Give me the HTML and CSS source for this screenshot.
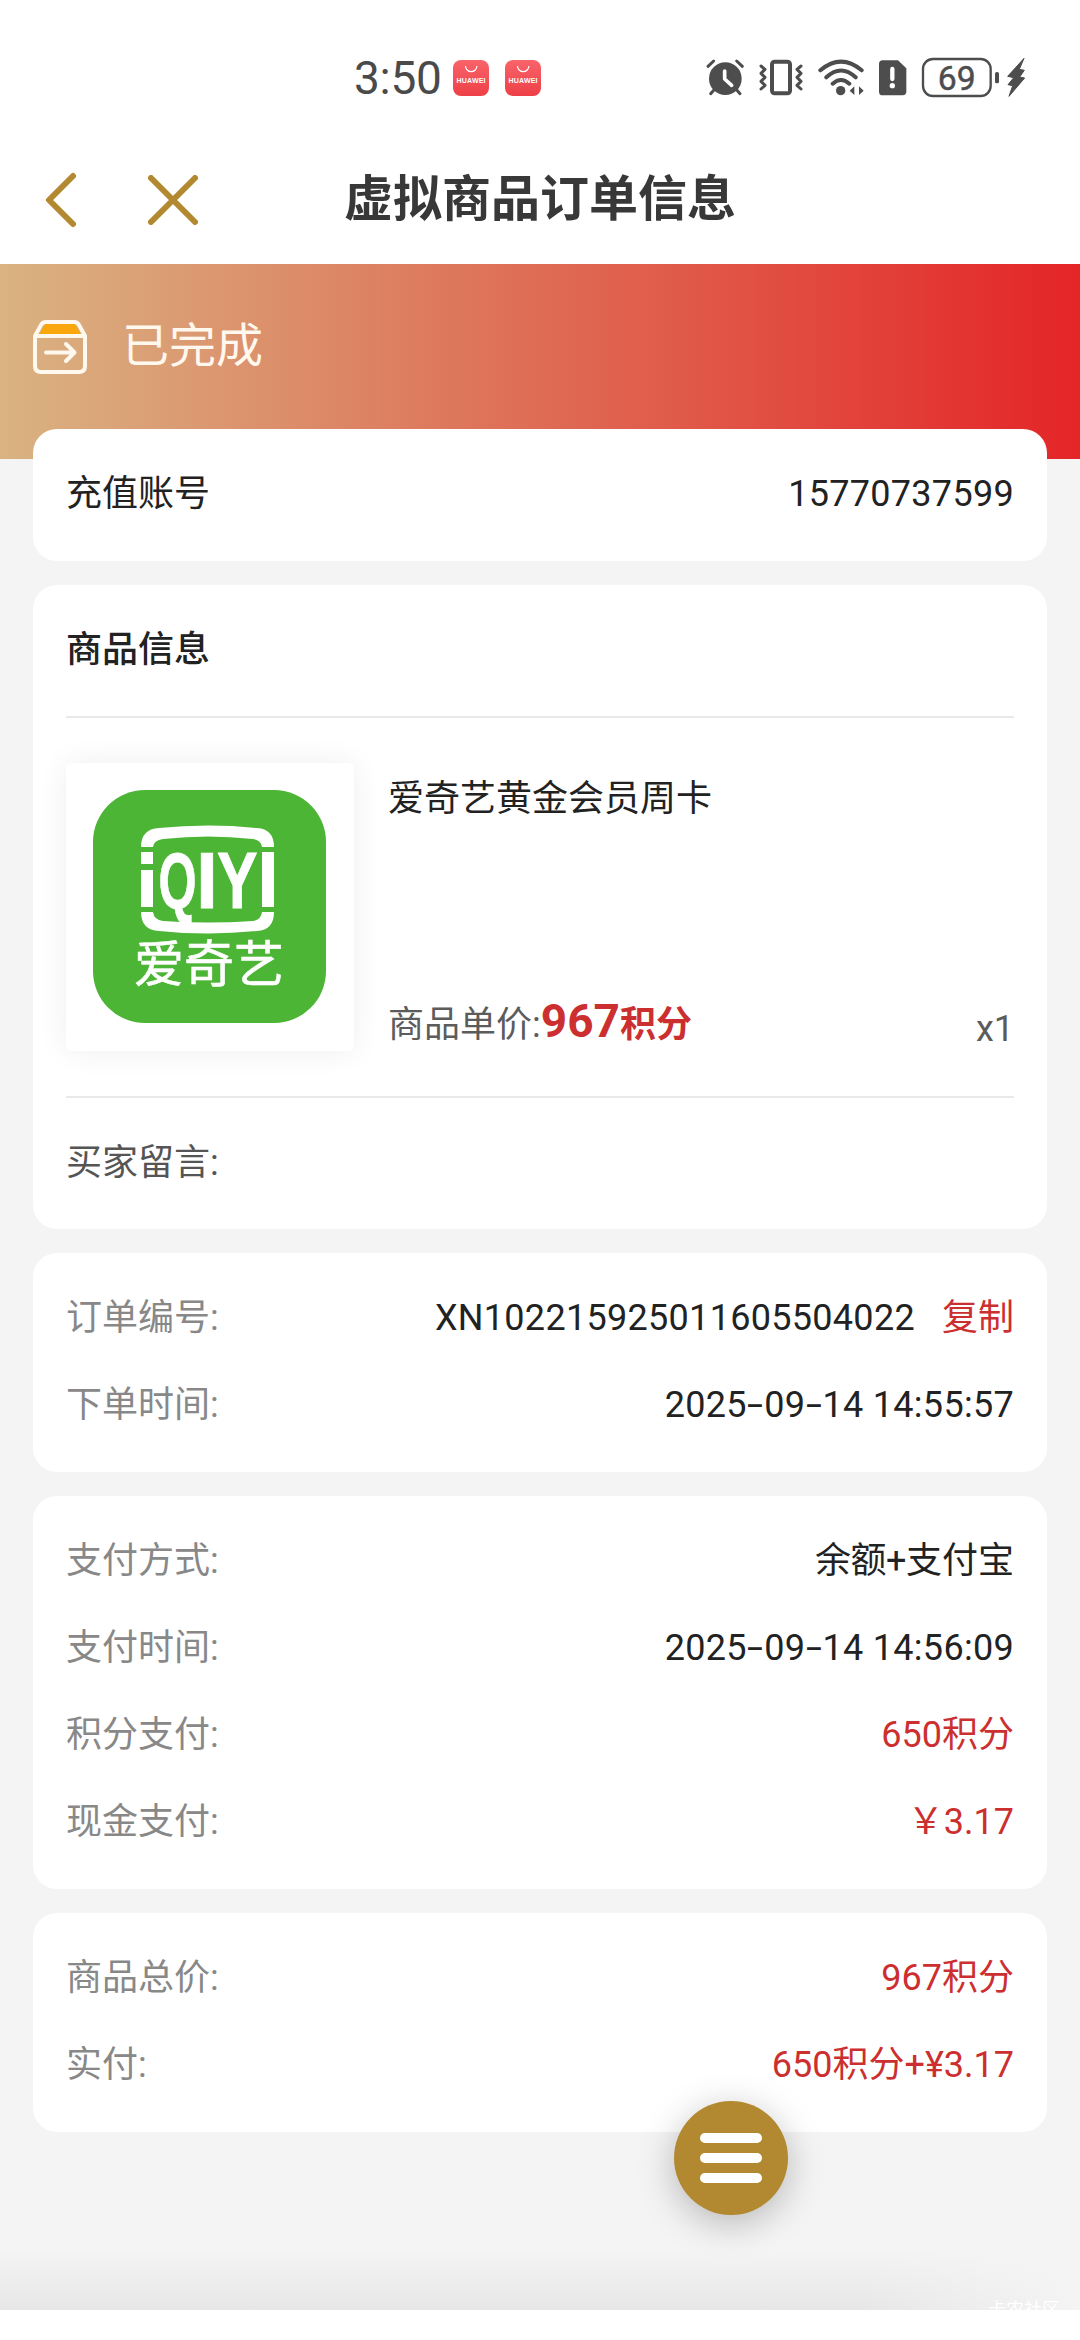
FILE: index.html
```html
<!DOCTYPE html>
<html lang="zh-CN">
<head>
<meta charset="utf-8">
<title>虚拟商品订单信息</title>
<link rel="stylesheet" href="styles.css">
</head>
<body>
<div class="screen">
  <header class="statusbar">
    <span class="time">3:50</span>
    <svg class="app" viewBox="0 0 36 36"><defs><linearGradient id="hw" x1="0" y1="0" x2="0" y2="1"><stop offset="0" stop-color="#f8646a"/><stop offset="1" stop-color="#ee3f46"/></linearGradient></defs><rect width="36" height="36" rx="8" fill="url(#hw)"/><path d="M12.5 6a5.7 5.7 0 0 0 11.4 0" fill="none" stroke="#fff" stroke-width="1.2"/><text x="18" y="23" textLength="29" text-anchor="middle" class="hwtext">HUAWEI</text></svg>
    <svg class="app" viewBox="0 0 36 36"><rect width="36" height="36" rx="8" fill="url(#hw)"/><path d="M12.5 6a5.7 5.7 0 0 0 11.4 0" fill="none" stroke="#fff" stroke-width="1.2"/><text x="18" y="23" textLength="29" text-anchor="middle" class="hwtext">HUAWEI</text></svg>
    <div class="indicators">
      <svg width="40" height="40" viewBox="40 55 120 120"><circle cx="101" cy="117" r="49" fill="#4d4d4d"/><path d="M49 80 66 64M152 80 135 64M66 152 57 162M136 152 145 162" stroke="#4d4d4d" stroke-width="9" stroke-linecap="round"/><path d="M99 94V118L120 137" fill="none" stroke="#fff" stroke-width="11" stroke-linecap="round" stroke-linejoin="round"/></svg>
      <svg width="46" height="40" viewBox="199 55 138 120" fill="none" stroke="#4d4d4d"><rect x="241" y="66" width="54" height="95" rx="8" stroke-width="12"/><path d="M208 79 220 89 208 101 220 113 208 125 220 137 208 148M328 79 316 89 328 101 316 113 328 125 316 137 328 148" stroke-width="9" stroke-linecap="round" stroke-linejoin="round"/></svg>
      <svg width="48" height="40" viewBox="377 55 144 120" fill="none" stroke="#4d4d4d" stroke-width="12" stroke-linecap="round"><path d="M387 92Q449 40 511 92M405 113Q449 72 493 113M424 132Q449 110 474 132"/><circle cx="448" cy="153" r="14" fill="#4d4d4d" stroke="none"/><path d="M475 153 489 140V166ZM517 153 503 140V166Z" fill="#4d4d4d" stroke="none"/></svg>
      <svg width="30" height="40" viewBox="560 55 90 120"><path d="M574 62H620L645 86V155Q645 167 634 167H574Q563 167 563 156V73Q563 62 574 62Z" fill="#4d4d4d"/><path d="M603 88V118" stroke="#fff" stroke-width="13" stroke-linecap="round"/><circle cx="603" cy="138" r="8" fill="#fff"/></svg>
      <svg width="106" height="42" viewBox="688 52 318 126"><rect x="694" y="58" width="203" height="111" rx="30" fill="none" stroke="#4d4d4d" stroke-width="7"/><rect x="910" y="97" width="12" height="34" rx="5" fill="#4d4d4d"/><path d="M997 56 948 110 966 114 949 135 963 138 952 170 999 115 984 112 998 92 983 89Z" fill="#4d4d4d" stroke="#4d4d4d" stroke-width="3" stroke-linejoin="round"/><text x="795" y="150" text-anchor="middle" class="battery">69</text></svg>
    </div>
  </header>
  <nav class="navbar">
    <svg class="back" viewBox="0 0 32 56"><path d="M28 4 4 28 28 52"/></svg>
    <svg class="close" viewBox="0 0 50 50"><path d="M3 3 47 47M47 3 3 47"/></svg>
    <h1>虚拟商品订单信息</h1>
  </nav>
  <section class="banner">
    <svg class="box" viewBox="0 0 54 54"><path d="M12 4H42L48 15H6Z" fill="#f9a70c"/><path d="M2 16 8 5Q9.500 2 13 2H41Q44.500 2 46 5L52 16V46Q52 52 46 52H8Q2 52 2 46ZM2 16H52M13 32.500H41M33 24 41.500 32.500 33 41" fill="none" stroke="#fff8ee" stroke-width="4" stroke-linecap="round" stroke-linejoin="round"/></svg>
    <span>已完成</span>
  </section>
  <main class="cards">
    <section class="card">
      <div class="row dark"><span>充值账号</span><span class="value num">15770737599</span></div>
    </section>
    <section class="card goods">
      <h2>商品信息</h2>
      <div class="product">
        <div class="thumb">
          <svg viewBox="0 0 233 233"><rect width="233" height="233" rx="52" fill="#4cb535"/><g fill="#fff"><path d="M48 57Q48 39 66 38Q115 33 164 38Q181 39 181 57H169Q168 50 160 49Q115 44 70 49Q61 50 60 57Z"/><path d="M48 122Q48 140 66 141Q115 146 164 141Q181 140 181 122H169Q168 130 160 131Q115 134 70 131Q61 130 60 122Z"/><rect x="48" y="62" width="12" height="12"/><rect x="48" y="80" width="12" height="37"/><rect x="169" y="62" width="12" height="55"/></g><g class="logo"><text x="0" y="0" transform="translate(65.500 117.500) scale(.62 1)">Q</text><text x="103" y="117.500">I</text><text x="0" y="0" transform="translate(124 117.500) scale(.77 1)">Y</text></g><text x="116" y="192" text-anchor="middle" class="logocn">爱奇艺</text></svg>
        </div>
        <div class="detail">
          <div class="name">爱奇艺黄金会员周卡</div>
          <div class="price"><span>商品单价:<b class="amount">967</b><b>积分</b></span><span class="count">x1</span></div>
        </div>
      </div>
      <div class="message">买家留言:</div>
    </section>
    <section class="card">
      <div class="row"><span>订单编号:</span><span class="value num">XN102215925011605504022<a class="red copy">复制</a></span></div>
      <div class="row"><span>下单时间:</span><span class="value num">2025<i>-</i>09<i>-</i>14 14:55:57</span></div>
    </section>
    <section class="card">
      <div class="row"><span>支付方式:</span><span class="value"><span class="plus">余额+</span>支付宝</span></div>
      <div class="row"><span>支付时间:</span><span class="value num">2025<i>-</i>09<i>-</i>14 14:56:09</span></div>
      <div class="row"><span>积分支付:</span><span class="value red">650积分</span></div>
      <div class="row"><span>现金支付:</span><span class="value red">￥3.17</span></div>
    </section>
    <section class="card">
      <div class="row"><span>商品总价:</span><span class="value red">967积分</span></div>
      <div class="row"><span>实付:</span><span class="value red">650积分+¥3.17</span></div>
    </section>
  </main>
  <div class="shade"></div>
  <span class="watermark">卡农社区</span>
  <div class="fab"><span></span><span></span><span></span></div>
</div>
</body>
</html>
```
FILE: styles.css
```css
* { box-sizing: border-box; }
body { margin: 0; background: #fff; font-family: Roboto, "Noto Sans CJK SC", sans-serif; font-size: 36px; color: #222; }
.screen { position: relative; width: 1080px; height: 2310px; overflow: hidden; background: #f4f4f4; }
svg { display: block; flex: none; }
.statusbar { display: flex; align-items: center; height: 136px; padding: 20px 53px 0 354px; background: #fff; }
.time { width: 99px; font-size: 46px; color: #4a4a4a; letter-spacing: -.3px; }
.app { width: 36px; height: 36px; margin-right: 16px; }
.hwtext { font: 700 7px "Liberation Sans", sans-serif; fill: #fff; }
.battery { font: 400 101px Roboto, sans-serif; fill: #4d4d4d; stroke: #4d4d4d; stroke-width: 1.5; }
.indicators { display: flex; align-items: center; flex: 1; justify-content: flex-end; gap: 13px; }
.navbar { display: flex; align-items: center; height: 128px; padding: 0 0 0 45px; background: #fff; }
.navbar path { fill: none; stroke: #b28830; stroke-width: 6; stroke-linecap: round; stroke-linejoin: round; }
.back { width: 32px; height: 56px; }
.close { width: 50px; height: 50px; margin-left: 71px; }
h1 { margin: 0 0 0 146px; font-size: 49px; line-height: 70px; font-weight: 700; color: #383838; white-space: nowrap; }
.banner { display: flex; gap: 35px; height: 195px; padding: 56px 33px; background: linear-gradient(90deg, #d9b382, #e42528); color: #fff8ee; font-size: 47px; line-height: 52px; }
.box { width: 54px; height: 54px; }
.cards { position: relative; display: flex; flex-direction: column; gap: 24px; margin-top: -30px; padding: 0 33px; }
.card { padding: 22px 33px 23px; border-radius: 24px; background: #fff; }
.row { display: flex; justify-content: space-between; height: 87px; line-height: 87px; color: #888; white-space: nowrap; }
.dark, .value { color: #222; }
.num { letter-spacing: .3px; }
.value i { display: inline-block; font-style: normal; transform: scaleX(1.6); margin: 0 3.5px; }
.plus { letter-spacing: -.5px; }
.red, b { color: #cc2f2f; }
.copy { margin-left: 27px; letter-spacing: 0; }
.goods { padding: 0 33px; height: 644px; display: flex; flex-direction: column; }
h2 { margin: 0; height: 133px; line-height: 131px; font-size: 36px; font-weight: 500; border-bottom: 2px solid #e9e9e9; }
.product { display: flex; gap: 34px; height: 380px; padding-top: 45px; border-bottom: 2px solid #e9e9e9; }
.thumb { flex: none; width: 288px; height: 288px; padding: 27px; border-radius: 6px; box-shadow: 0 0 30px rgba(0,0,0,.07); }
.thumb svg { width: 233px; height: 233px; }
.logo { font: 700 79px "Liberation Sans", sans-serif; fill: #fff; stroke: #fff; stroke-width: .8; }
.logocn { font: 400 50px "Noto Sans CJK SC", sans-serif; fill: #fff; stroke: #fff; stroke-width: .6; }
.detail { flex: 1; height: 297px; display: flex; flex-direction: column; justify-content: space-between; padding: 9px 0 0; }
.name { line-height: 54px; }
.price { display: flex; justify-content: space-between; align-items: flex-end; color: #5c5c5c; line-height: 70px; }
.count { line-height: 61px; }
.amount { font-size: 46px; }
.message { line-height: 130px; color: #555; }
.shade { position: absolute; left: 0; right: 0; bottom: 0; height: 60px; background: linear-gradient(90deg, transparent 80%, #f4f4f4), linear-gradient(180deg, #f4f4f4, #e7e7e7); }
.watermark { position: absolute; right: 20px; top: 2300px; font-size: 18px; line-height: 20px; color: #fff; }
.fab { position: absolute; left: 674px; top: 2101px; width: 114px; height: 114px; border-radius: 50%; background: #b28830; box-shadow: 0 8px 36px rgba(0,0,0,.25); display: flex; flex-direction: column; align-items: center; justify-content: center; gap: 10px; }
.fab span { width: 62px; height: 10px; border-radius: 5px; background: #fff; }
```
